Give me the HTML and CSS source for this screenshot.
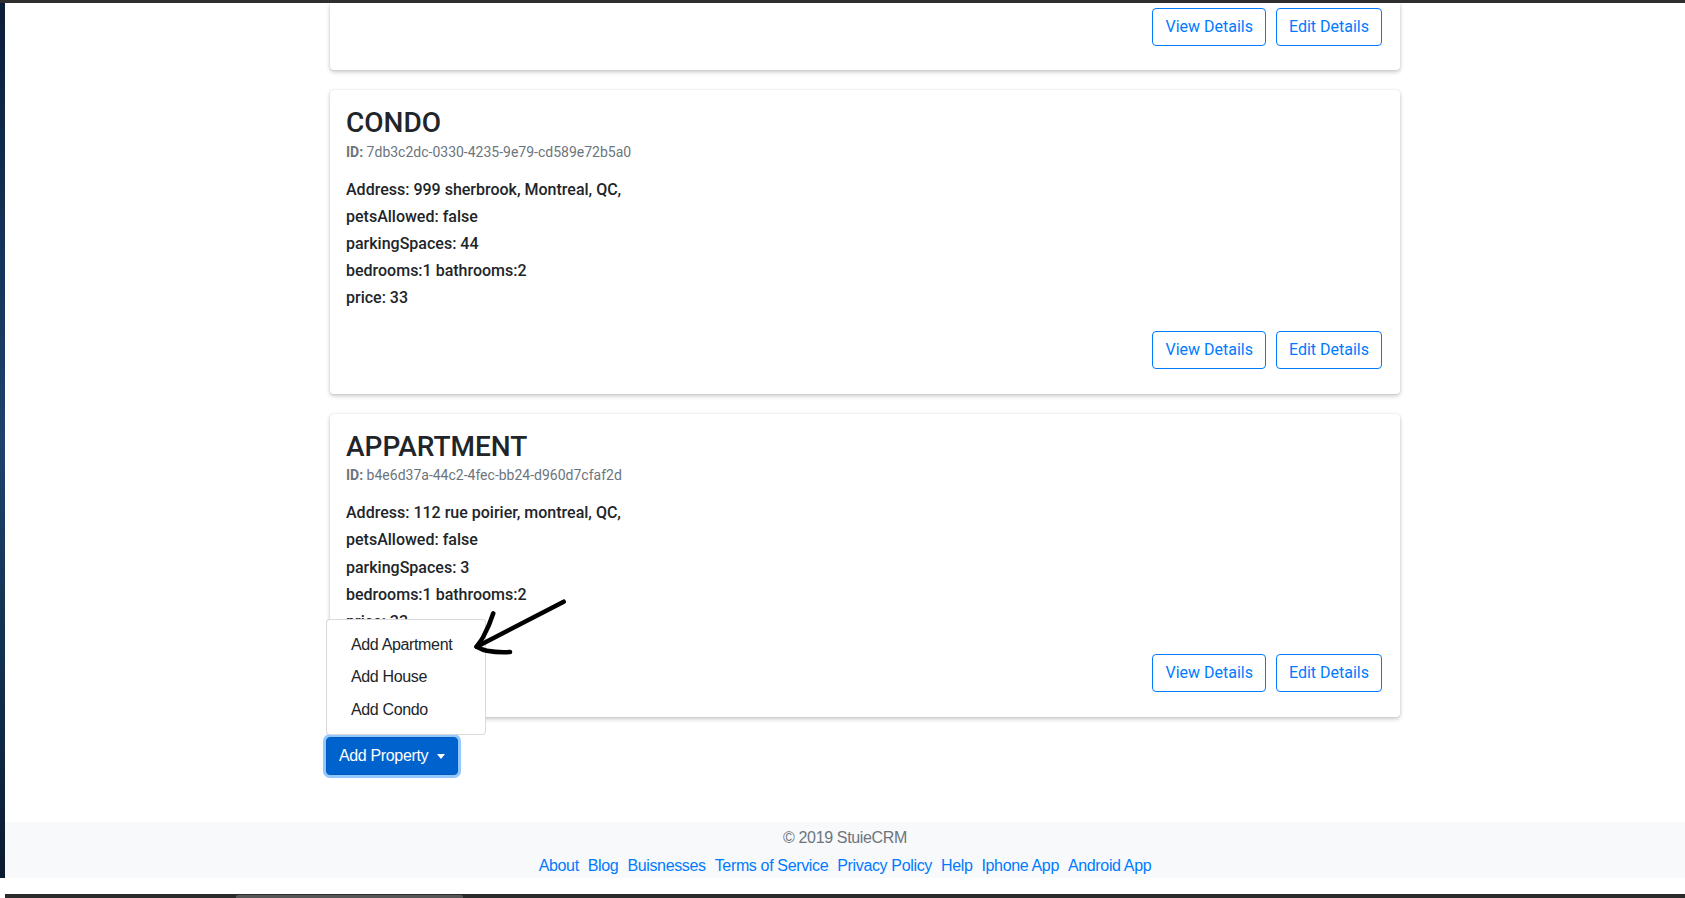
FILE: index.html
```html
<!DOCTYPE html>
<html lang="en">
<head>
<meta charset="utf-8">
<title>StuieCRM - Properties</title>
<link rel="stylesheet" href="styles.css">
</head>
<body>
<div class="window">
  <div class="topbar"></div>
  <div class="middle">
    <div class="desktop"></div>
    <div class="viewport">
      <main class="content">
        <div class="card card-tail">
          <div class="card-actions">
            <button class="btn btn-outline">View Details</button>
            <button class="btn btn-outline">Edit Details</button>
          </div>
        </div>

        <div class="card">
          <h3 class="card-title">CONDO</h3>
          <div class="card-id"><b>ID:</b> 7db3c2dc-0330-4235-9e79-cd589e72b5a0</div>
          <h6 class="card-line">Address: 999 sherbrook, Montreal, QC,</h6>
          <h6 class="card-line">petsAllowed: false</h6>
          <h6 class="card-line">parkingSpaces: 44</h6>
          <h6 class="card-line">bedrooms:1 bathrooms:2</h6>
          <h6 class="card-line">price: 33</h6>
          <div class="card-actions spaced">
            <button class="btn btn-outline">View Details</button>
            <button class="btn btn-outline">Edit Details</button>
          </div>
        </div>

        <div class="card">
          <h3 class="card-title">APPARTMENT</h3>
          <div class="card-id"><b>ID:</b> b4e6d37a-44c2-4fec-bb24-d960d7cfaf2d</div>
          <h6 class="card-line">Address: 112 rue poirier, montreal, QC,</h6>
          <h6 class="card-line">petsAllowed: false</h6>
          <h6 class="card-line">parkingSpaces: 3</h6>
          <h6 class="card-line">bedrooms:1 bathrooms:2</h6>
          <h6 class="card-line">price: 33</h6>
          <div class="card-actions spaced">
            <button class="btn btn-outline">View Details</button>
            <button class="btn btn-outline">Edit Details</button>
          </div>
        </div>

        <div class="dropup">
          <div class="dropdown-menu">
            <a class="dropdown-item">Add Apartment</a>
            <a class="dropdown-item">Add House</a>
            <a class="dropdown-item">Add Condo</a>
          </div>
          <button class="btn btn-primary">Add Property<span class="caret"></span></button>
          <svg class="annotation" width="104" height="68" viewBox="0 0 104 68">
            <path d="M93.7 9.7 L6.7 54.7" />
            <path d="M23.3 21.3 C21.5 27 18 36 13.3 44.7 C11 49 8.5 52 6.7 54.7" />
            <path d="M6.7 54.7 C10 56.5 13 58 16.7 58.7 C24 60 33 60.5 40 60" />
          </svg>
        </div>
      </main>
      <footer class="footer">
        <div class="copyright">© 2019 StuieCRM</div>
        <nav class="footer-links">
          <a>About</a>
          <a>Blog</a>
          <a>Buisnesses</a>
          <a>Terms of Service</a>
          <a>Privacy Policy</a>
          <a>Help</a>
          <a>Iphone App</a>
          <a>Android App</a>
        </nav>
      </footer>
    </div>
  </div>
  <div class="bottomgap"></div>
  <div class="statusbar"><div class="thumb"></div></div>
</div>
</body>
</html>
```

FILE: styles.css
```css
html, body {
  margin: 0;
  padding: 0;
  background: #ffffff;
  overflow: hidden;
}

.window {
  width: 1685px;
  height: 898px;
  display: flex;
  flex-direction: column;
}

.topbar {
  height: 3px;
  background: #2e2e2e;
  flex: none;
}

.middle {
  height: 875px;
  display: flex;
  flex: none;
}

.desktop {
  width: 5px;
  flex: none;
  background: linear-gradient(to bottom, #0b1d38 0%, #16345a 30%, #1d426b 50%, #12304f 75%, #0a1a30 100%);
}

.viewport {
  flex: 1;
  display: flex;
  flex-direction: column;
  overflow: hidden;
  background: #ffffff;
}

.content {
  flex: 1;
  padding-left: 325px;
  width: 1070px;
}

/* Cards */
.card {
  background: #fff;
  border-radius: 4px;
  box-shadow: 0 2px 4px rgba(0, 0, 0, 0.22), 0 0 2px rgba(0, 0, 0, 0.1);
  padding: 16px 18px 25px 16px;
  margin-top: 20px;
  font-family: Roboto, "Noto Sans", sans-serif;
  color: #212529;
}

.card-tail {
  margin-top: 0;
  padding-top: 5px;
  padding-bottom: 24px;
  border-top-left-radius: 0;
  border-top-right-radius: 0;
}

.card-title {
  margin: 0 0 2px;
  font-size: 28px;
  line-height: 1.2;
  font-weight: 500;
}

.card-id {
  font-size: 14px;
  line-height: 20px;
  color: #6c757d;
  margin-bottom: 18px;
}

.card-id b {
  font-weight: 700;
}

.card-line {
  margin: 0 0 8px;
  font-size: 16px;
  line-height: 1.2;
  font-weight: 500;
}

.card-actions {
  display: flex;
  justify-content: flex-end;
  gap: 10px;
}

.card-actions.spaced {
  margin-top: 23px;
}

.btn {
  font-size: 16px;
  line-height: 24px;
  padding: 6px 12px;
  border-radius: 4px;
  border: 1px solid transparent;
  cursor: pointer;
}

.btn-outline {
  font-family: Roboto, "Noto Sans", sans-serif;
  color: #007bff;
  border-color: #007bff;
  background: transparent;
}

/* Dropup */
.dropup {
  position: relative;
  margin-top: 20px;
  margin-left: -4px;
  width: max-content;
  font-family: "Liberation Sans", Arial, sans-serif;
  letter-spacing: -0.35px;
}

.btn-primary {
  font-family: "Liberation Sans", Arial, sans-serif;
  letter-spacing: -0.35px;
  color: #fff;
  background: #0062cc;
  border-color: #005cbf;
  box-shadow: 0 0 0 3px rgba(38, 143, 255, 0.5);
  display: flex;
  align-items: center;
}

.caret {
  display: inline-block;
  margin-left: 9px;
  border-top: 5px solid #fff;
  border-left: 4.5px solid transparent;
  border-right: 4.5px solid transparent;
}

.dropdown-menu {
  position: absolute;
  bottom: 100%;
  left: 0;
  margin-bottom: 2px;
  min-width: 160px;
  padding: 8px 0;
  background: #fff;
  border: 1px solid rgba(0, 0, 0, 0.15);
  border-radius: 4px;
  box-sizing: border-box;
  z-index: 2;
}

.dropdown-item {
  display: block;
  padding: 4.3px 24px;
  font-size: 16px;
  line-height: 24px;
  color: #212529;
  white-space: nowrap;
}

.annotation {
  position: absolute;
  left: 144px;
  top: -145px;
  z-index: 3;
  fill: none;
  stroke: #000;
  stroke-width: 4.5;
  stroke-linecap: round;
  stroke-linejoin: round;
}

/* Footer */
.footer {
  flex: none;
  height: 56px;
  box-sizing: border-box;
  padding-top: 4px;
  background: #f8f9fa;
  font-family: "Liberation Sans", Arial, sans-serif;
  font-size: 16px;
  line-height: 24px;
  letter-spacing: -0.35px;
  text-align: center;
}

.copyright {
  color: #6c757d;
  margin-bottom: 4px;
}

.footer-links {
  display: flex;
  justify-content: center;
  gap: 9px;
}

.footer-links a {
  color: #007bff;
  text-decoration: none;
}

/* Bottom window chrome */
.bottomgap {
  height: 16px;
  flex: none;
  background: #fff;
}

.statusbar {
  height: 4px;
  flex: none;
  margin-left: 5px;
  background: #2b2b2b;
  position: relative;
}

.thumb {
  position: absolute;
  left: 231px;
  width: 227px;
  top: 1px;
  bottom: 0;
  background: #575757;
  border-radius: 2px 2px 0 0;
}
```
